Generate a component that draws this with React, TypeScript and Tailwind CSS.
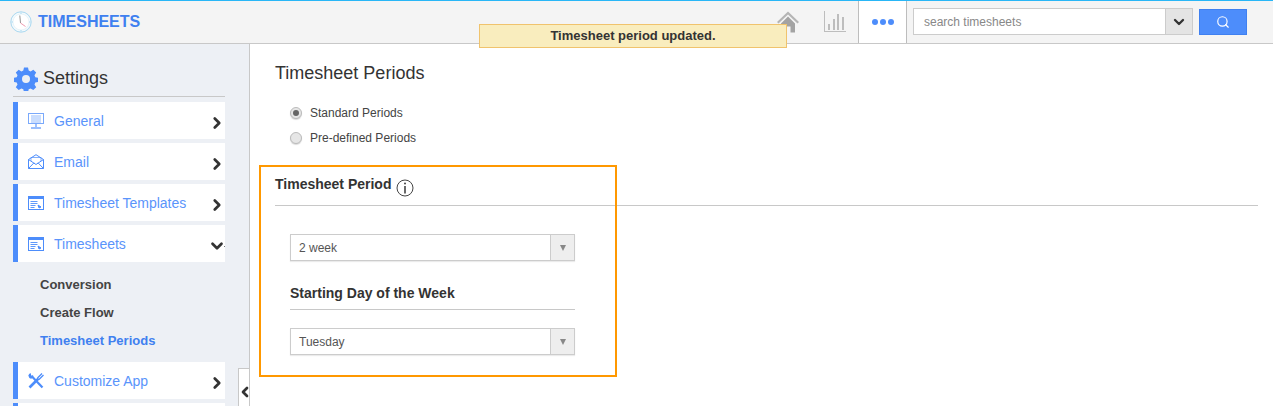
import { ChevronDown, ChevronLeft, ChevronRight, Search } from 'lucide-react';
import type { ReactNode } from 'react';

function ClockLogo() {
  return (
    <svg width="22" height="22" viewBox="0 0 22 22" className="shrink-0">
      <circle cx="11" cy="11" r="10.2" fill="#f3f9fc" stroke="#a9d8f0" strokeWidth="1" />
      <circle cx="11" cy="11" r="8" fill="#fff" stroke="#e3f1f8" strokeWidth="0.8" />
      <path d="M10.5 12 L9.8 4.5" stroke="#777" strokeWidth="0.8" fill="none" />
      <path d="M10.5 12 L15.5 15.5" stroke="#e8829a" strokeWidth="0.8" fill="none" />
      <path d="M11 1.5v1.5M11 19v1.5M1.5 11H3M19 11h1.5" stroke="#a9d8f0" strokeWidth="1" />
    </svg>
  );
}

function HomeIcon() {
  return (
    <svg width="22" height="22" viewBox="0 0 22 22">
      <path d="M11 0.5 L0 11 L1.5 12.5 L11 3.5 L20.5 12.5 L22 11 Z" fill="#b5b5b5" />
      <path d="M4 12.5 L11 5.5 L18 12.5 V21.5 H13.5 V15.5 H8.5 V21.5 H4 Z" fill="#a3a3a3" />
    </svg>
  );
}

function ChartIcon() {
  return (
    <svg width="22" height="22" viewBox="0 0 22 22" fill="#bdbdbd">
      <rect x="0" y="0" width="1" height="21" />
      <rect x="0" y="20" width="22" height="1" />
      <rect x="4" y="13" width="2" height="6" />
      <rect x="9" y="8" width="2" height="11" />
      <rect x="13" y="3" width="2" height="16" />
      <rect x="18" y="6" width="2" height="13" />
    </svg>
  );
}

function GearIcon() {
  return (
    <svg width="24" height="24" viewBox="0 0 24 24" className="shrink-0">
      <path
        fill="#4d8dfb"
        d="M10 0.5h4l.7 3.1 1.9.8 2.7-1.7 2.9 2.9-1.7 2.7.8 1.9 3.1.7v4l-3.1.7-.8 1.9 1.7 2.7-2.9 2.9-2.7-1.7-1.9.8-.7 3.1h-4l-.7-3.1-1.9-.8-2.7 1.7-2.9-2.9 1.7-2.7-.8-1.9-3.1-.7v-4l3.1-.7.8-1.9-1.7-2.7 2.9-2.9 2.7 1.7 1.9-.8z"
      />
      <circle cx="12" cy="12" r="4" fill="#edf0f5" />
    </svg>
  );
}

function MonitorIcon() {
  return (
    <svg width="16" height="16" viewBox="0 0 16 16" fill="none" stroke="#7aa9fb">
      <rect x="0.5" y="0.5" width="15" height="10" />
      <path d="M3 3h10M3 5h10M3 7h10M3 9h10" strokeWidth="0.8" />
      <path d="M8 11v3M3 15h10" strokeWidth="1.4" />
    </svg>
  );
}

function MailIcon() {
  return (
    <svg width="16" height="15" viewBox="0 0 16 15" fill="none" stroke="#4d8dfb">
      <path d="M0.5 5.5 L8 0.7 L15.5 5.5 V14.5 H0.5 Z" />
      <path d="M3 7 V3.5 H13 V7" strokeWidth="0.7" />
      <path d="M0.5 5.5 L8 10.5 L15.5 5.5M0.5 14.5 L6 8.8M15.5 14.5 L10 8.8" />
    </svg>
  );
}

function TemplateIcon() {
  return (
    <svg width="16" height="14" viewBox="0 0 16 14" fill="none" stroke="#4d8dfb">
      <rect x="0.5" y="0.5" width="15" height="13" />
      <rect x="0" y="0" width="16" height="3" fill="#4d8dfb" stroke="none" />
      <path d="M2.5 5.5h7M2.5 7.5h7M2.5 9.5h5M2.5 11.5h4" strokeWidth="0.9" />
      <path d="M10 9 L13 11 L11 12 Z" fill="#4d8dfb" />
    </svg>
  );
}

function ToolsIcon() {
  return (
    <svg width="16" height="16" viewBox="0 0 16 16" fill="none" stroke="#4d8dfb">
      <path d="M1.5 14.5 L10.5 5.5" strokeWidth="2.6" />
      <path d="M3.5 3 L14.5 14.5" strokeWidth="2.2" />
      <path d="M0.3 2.5 Q1 0.3 3 0.3 L3 2.5 L5.2 2.5 Q5.7 5.2 3 5.8 Q0.8 5.2 0.3 2.5 Z" fill="#4d8dfb" stroke="none" />
      <path d="M9.5 5 L14 0.5 M11 6.5 L15.5 2" strokeWidth="1.3" />
    </svg>
  );
}

function NavItem({ icon, label, open }: { icon: ReactNode; label: string; open?: boolean }) {
  return (
    <div className="flex h-[37px] items-center border-l-[5px] border-[#4d8dfb] bg-white">
      <span className="flex w-[36px] shrink-0 pl-[10px]">{icon}</span>
      <span className="flex-1 pt-[1px] text-[14px] text-[#5a94fb]">{label}</span>
      {open ? (
        <>
          <ChevronDown size={18} strokeWidth={3.6} className="mr-[-5px] mt-[4px] text-[#333]" />
          <span className="ml-[3px] mt-[6px] h-[1px] w-[1px] bg-[#777]" />
        </>
      ) : (
        <ChevronRight size={18} strokeWidth={3.6} className="mr-[-1px] mt-[4px] text-[#333]" />
      )}
    </div>
  );
}

function SelectBox({ value }: { value: string }) {
  return (
    <div className="flex h-[27px] w-[285px] border border-[#ccc] bg-white shadow-[0_1px_1px_rgba(0,0,0,0.08)]">
      <span className="flex flex-1 items-center pl-[8px] text-[12px] text-[#555]">{value}</span>
      <span className="flex w-[24px] items-center justify-center border-l border-[#ccc] bg-[#eee]">
        <span className="mt-[1px] h-0 w-0 border-x-[3.5px] border-t-[6px] border-x-transparent border-t-[#888]" />
      </span>
    </div>
  );
}

function Radio({ checked, label }: { checked?: boolean; label: string }) {
  return (
    <label className="flex h-[25px] items-center">
      <span className="flex h-[12px] w-[12px] items-center justify-center rounded-full border border-[#bbb] bg-[#e6e6e6] shadow-[0_1px_1px_rgba(0,0,0,0.15)]">
        {checked && <span className="h-[6px] w-[6px] rounded-full bg-[#666]" />}
      </span>
      <span className="ml-[8px] text-[12px] text-[#444]">{label}</span>
    </label>
  );
}

export default function App() {
  return (
    <div className="relative flex h-[406px] w-[1273px] flex-col overflow-hidden bg-white font-['Liberation_Sans',Arial,sans-serif]">
      <header className="flex h-[44px] shrink-0 items-center border-b border-t border-b-[#c8c8c8] border-t-[#29b6f6] bg-[#f4f4f4]">
        <div className="ml-[10px] flex items-center">
          <ClockLogo />
          <span className="ml-[6px] text-[16px] font-bold text-[#3f80f0]">TIMESHEETS</span>
        </div>
        <div className="ml-auto flex h-full items-center">
          <span className="mr-[25px] flex"><HomeIcon /></span>
          <span className="mr-[12px] flex"><ChartIcon /></span>
          <div className="flex h-full w-[49px] items-center justify-center gap-[2px] border-x border-[#bdbdbd] bg-white pl-[1px]">
            <span className="h-[6px] w-[6px] rounded-full bg-[#4d8dfb]" />
            <span className="h-[6px] w-[6px] rounded-full bg-[#4d8dfb]" />
            <span className="h-[6px] w-[6px] rounded-full bg-[#4d8dfb]" />
          </div>
          <div className="-mt-[1px] ml-[6px] flex h-[27px] w-[280px] border border-[#ccc] bg-white">
            <span className="flex flex-1 items-center pl-[10px] text-[12px] text-[#888]">search timesheets</span>
            <span className="flex w-[27px] items-center justify-center border-l border-[#ccc] bg-[#e4e4e4]">
              <ChevronDown size={16} strokeWidth={3.5} className="text-[#333]" />
            </span>
          </div>
          <button
            type="button"
            className="-mt-[1px] ml-[6px] mr-[26px] flex h-[26px] w-[48px] items-center justify-center border border-[#3f80f0] bg-[#4d8dfb]"
          >
            <Search size={14} className="text-white" />
          </button>
        </div>
      </header>

      <div className="flex min-h-0 flex-1">
        <aside className="relative w-[250px] shrink-0 border-r border-[#c8c8c8] bg-[#edf0f5] pl-[13px] pr-[24px] pt-[22px]">
          <div className="flex h-[31px] items-center gap-[5px] border-b border-[#c8c8c8] pb-[5px] pl-[1px]">
            <GearIcon />
            <span className="text-[18px] text-[#333]">Settings</span>
          </div>
          <div className="mt-[5px] flex flex-col gap-[4px]">
            <NavItem icon={<MonitorIcon />} label="General" />
            <NavItem icon={<MailIcon />} label="Email" />
            <NavItem icon={<TemplateIcon />} label="Timesheet Templates" />
            <NavItem icon={<TemplateIcon />} label="Timesheets" open />
          </div>
          <ul className="flex h-[100px] flex-col justify-center gap-[11px] pl-[27px] text-[13px] font-bold leading-[17px] text-[#444]">
            <li>Conversion</li>
            <li>Create Flow</li>
            <li className="text-[#3f80f0]">Timesheet Periods</li>
          </ul>
          <div className="flex flex-col gap-[4px]">
            <NavItem icon={<ToolsIcon />} label="Customize App" />
            <div className="h-[37px] border-l-[5px] border-[#4d8dfb] bg-white" />
          </div>
          <button
            type="button"
            className="absolute left-[238px] top-[324px] flex h-[48px] w-[11px] items-center justify-center border border-r-0 border-[#c8c8c8] bg-white"
          >
            <ChevronLeft size={16} strokeWidth={4} className="ml-[1px] shrink-0 text-[#333]" />
          </button>
        </aside>

        <main className="min-w-0 flex-1 pl-[25px] pr-[15px] pt-[19px]">
          <h1 className="text-[18px] leading-[20px] text-[#333]">Timesheet Periods</h1>
          <div className="mt-[17px] pl-[15px]">
            <Radio checked label="Standard Periods" />
            <Radio label="Pre-defined Periods" />
          </div>
          <div className="mt-[21px] flex h-[35px] items-center gap-[5px] border-b border-[#c8c8c8] pb-[7px]">
            <h2 className="text-[14px] font-bold text-[#333]">Timesheet Period</h2>
            <svg width="18" height="18" viewBox="0 0 18 18" className="mt-[6px]" fill="none" stroke="#444">
              <circle cx="9" cy="9" r="8" />
              <path d="M9 7v7.5" strokeWidth="1.6" />
              <circle cx="9" cy="4.6" r="1" fill="#444" stroke="none" />
            </svg>
          </div>
          <div className="ml-[15px] w-[285px] pt-[28px]">
            <SelectBox value="2 week" />
            <div className="mt-[23px] border-b border-[#c8c8c8] pb-[7px] text-[14px] font-bold leading-[18px] text-[#333]">
              Starting Day of the Week
            </div>
            <div className="mt-[18px]">
              <SelectBox value="Tuesday" />
            </div>
          </div>
        </main>
      </div>

      {/* toast sits over the header edge */}
      <div className="absolute left-[479px] top-[24px] flex h-[24px] w-[308px] items-center justify-center border border-[#f0c36d] bg-[#f9edbe] text-[13px] font-bold text-[#333]">
        Timesheet period updated.
      </div>
      {/* orange annotation drawn over the page */}
      <div className="pointer-events-none absolute left-[259px] top-[165px] h-[212px] w-[358px] border-2 border-[#ff9800]" />
    </div>
  );
}
